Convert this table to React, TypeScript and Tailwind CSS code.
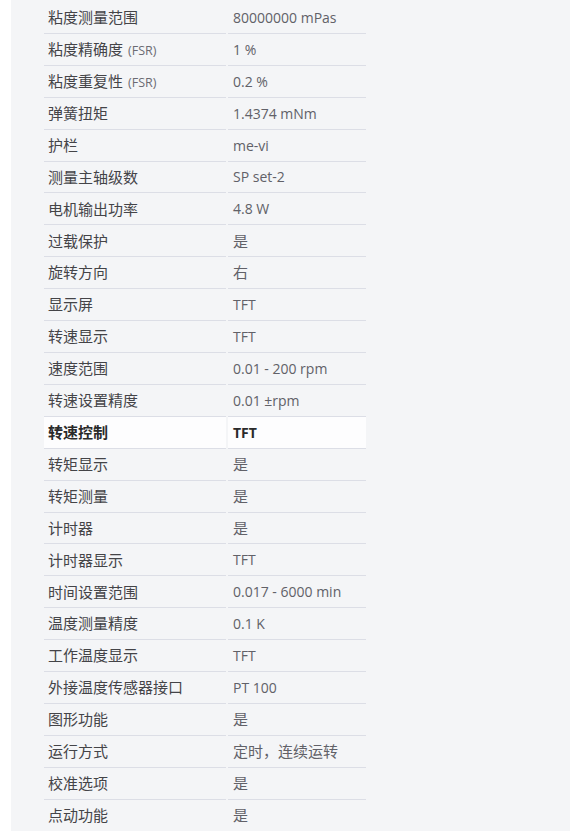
import React from 'react';

type Row = { label: string; note?: string; value: string; strong?: boolean };

const ROWS: Row[] = [
  { label: '粘度测量范围', value: '80000000 mPas' },
  { label: '粘度精确度', note: '(FSR)', value: '1 %' },
  { label: '粘度重复性', note: '(FSR)', value: '0.2 %' },
  { label: '弹簧扭矩', value: '1.4374 mNm' },
  { label: '护栏', value: 'me-vi' },
  { label: '测量主轴级数', value: 'SP set-2' },
  { label: '电机输出功率', value: '4.8 W' },
  { label: '过载保护', value: '是' },
  { label: '旋转方向', value: '右' },
  { label: '显示屏', value: 'TFT' },
  { label: '转速显示', value: 'TFT' },
  { label: '速度范围', value: '0.01 - 200 rpm' },
  { label: '转速设置精度', value: '0.01 ±rpm' },
  { label: '转速控制', value: 'TFT', strong: true },
  { label: '转矩显示', value: '是' },
  { label: '转矩测量', value: '是' },
  { label: '计时器', value: '是' },
  { label: '计时器显示', value: 'TFT' },
  { label: '时间设置范围', value: '0.017 - 6000 min' },
  { label: '温度测量精度', value: '0.1 K' },
  { label: '工作温度显示', value: 'TFT' },
  { label: '外接温度传感器接口', value: 'PT 100' },
  { label: '图形功能', value: '是' },
  { label: '运行方式', value: '定时，连续运转' },
  { label: '校准选项', value: '是' },
  { label: '点动功能', value: '是' },
];

// Chinese glyphs sit a touch larger than the latin runs in the original
const Txt = ({ s }: { s: string }) => (
  <>
    {s.split(/([\u3000-\u9fff\uff00-\uffef]+)/).map((part, i) =>
      /[\u3000-\u9fff\uff00-\uffef]/.test(part) ? (
        <span key={i} className="text-[15px]">{part}</span>
      ) : (
        part
      )
    )}
  </>
);

export default function App() {
  return (
    <div className="w-[578px] h-[831px] overflow-hidden bg-white pl-[11px] pr-[8px] font-['Open_Sans','Noto_Sans_CJK_SC',sans-serif]">
      <div className="h-full bg-[#f4f5f7] pl-[33px] pt-[2px]">
        <div className="grid w-[322px] grid-cols-[182px_138px] gap-x-[2px] text-[14px]">
          {ROWS.map((r, i) => {
            const last = i === ROWS.length - 1;
            const cell = `flex h-[31.92px] items-center whitespace-nowrap ${last ? '' : 'border-b border-[#dcdee6]'} ${r.strong ? 'bg-[#fdfdfe] font-bold text-[#2a2a2a]' : ''}`;
            return (
              <React.Fragment key={r.label}>
                <div className={`${cell} pl-[4px] ${r.strong ? '' : 'text-[#444448]'}`}>
                  <span>
                    <Txt s={r.label} />
                    {r.note && <span className="ml-[5px] text-[12.5px] text-[#6b6b73]">{r.note}</span>}
                  </span>
                </div>
                <div className={`${cell} pl-[5px] ${r.strong ? '' : 'text-[#616168]'}`}>
                  <span>
                    <Txt s={r.value} />
                  </span>
                </div>
              </React.Fragment>
            );
          })}
        </div>
      </div>
    </div>
  );
}
